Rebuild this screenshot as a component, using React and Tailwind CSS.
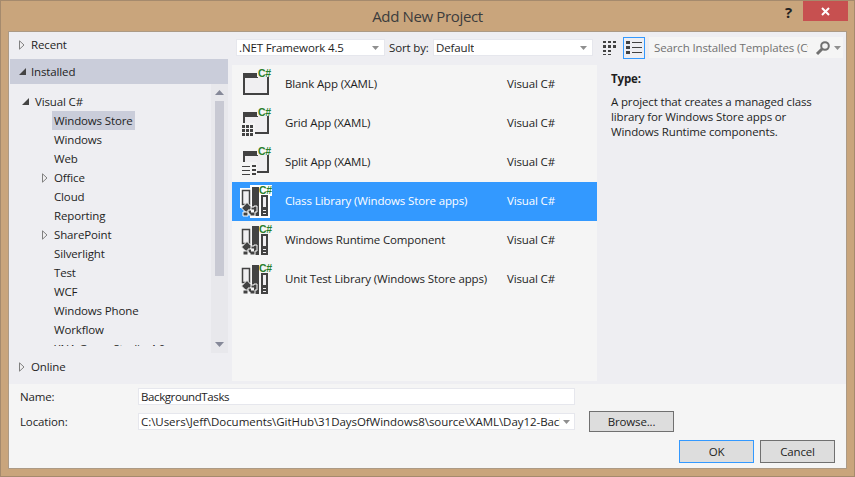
import React from "react";

const font = { fontFamily: '"Open Sans", "Noto Sans", sans-serif', fontSize: "11.5px", letterSpacing: "-0.14px" };

function CSharp({ x = 22, y = 12 }) {
  return (
    <text x={x} y={y} fontSize="10.5" fontWeight="700" fill="#2a7f2a" fontFamily='"Liberation Sans", sans-serif' style={{ letterSpacing: "-0.4px" }}>C#</text>
  );
}

function WindowIcon({ kind }) {
  return (
    <svg width="40" height="39" viewBox="0 0 40 39" className="shrink-0">
      <rect x="8" y="10" width="24" height="19" fill="#f0eff1" stroke="#424242" strokeWidth="2" />
      <rect x="7" y="8" width="15" height="5" fill="#424242" />
      <rect x="21" y="4" width="13" height="8" fill="#f5f5f5" />
      <CSharp />
      {kind === "grid" && (
        <g>
          <rect x="4" y="19" width="15" height="15" fill="#f5f5f5" />
          {[0, 4, 8].map((i) => [0, 4, 8].map((j) => <rect key={i + "-" + j} x={6 + i} y={21 + j} width="3" height="3" fill="#424242" />))}
        </g>
      )}
      {kind === "split" && (
        <g>
          <rect x="4" y="19" width="17" height="16" fill="#f5f5f5" />
          <rect x="6" y="23" width="8" height="1" fill="#424242" />
          <rect x="6" y="27" width="8" height="1" fill="#424242" />
          <rect x="6" y="31" width="8" height="1" fill="#424242" />
          <rect x="16" y="22" width="4" height="2" fill="#424242" />
          <rect x="16" y="26" width="4" height="2" fill="#424242" />
          <rect x="16" y="30" width="4" height="2" fill="#424242" />
        </g>
      )}
    </svg>
  );
}

function LibIcon({ selected }) {
  const halo = selected ? "#ffffff" : "#f5f5f5";
  const d = "#424242";
  return (
    <svg width="40" height="39" viewBox="0 0 40 39" className="shrink-0">
      <rect x="4" y="6" width="12" height="20" fill={halo} />
      <rect x="14" y="3" width="11" height="33" fill={halo} />
      <rect x="23" y="11" width="11" height="25" fill={halo} />
      <rect x="21" y="3" width="15" height="11" fill={halo} />
      <rect x="6.500" y="8.500" width="7" height="14" fill="#f0eff1" stroke={d} strokeWidth="1.500" />
      <rect x="16" y="5" width="7" height="29" fill={d} />
      <rect x="25" y="13" width="7" height="21" fill={d} />
      <rect x="27" y="15" width="3" height="10" fill="#f0eff1" />
      <rect x="27" y="28" width="3" height="1" fill="#f0eff1" />
      <rect x="27" y="31" width="3" height="1" fill="#f0eff1" />
      <path d="M5.500 26l5.500-5.500 5.500 5.500-5.500 5.500z" fill={d} stroke={halo} strokeWidth="1" />
      <path d="M12 28h3v-3h3v-1h3v6h-2v4h-5v-2h-2z" fill={d} stroke={halo} strokeWidth="1" />
      <rect x="15" y="27.500" width="3" height="3" fill={halo} />
      <path d="M7 30h5v4H7z" fill={d} stroke={halo} strokeWidth="1" />
      <CSharp x={23} y={12} />
    </svg>
  );
}

function Closed() {
  return (
    <svg width="6" height="10" viewBox="0 0 6 10" className="shrink-0">
      <path d="M0.500 0.800L5 5 0.500 9.200z" fill="#f0eff1" stroke="#808080" strokeWidth="1" />
    </svg>
  );
}

function Open() {
  return (
    <svg width="7" height="7" viewBox="0 0 7 7" className="shrink-0">
      <path d="M7 0v7H0z" fill="#444444" />
    </svg>
  );
}

function Caret({ color = "#8f8f8f" }) {
  return (
    <svg width="7" height="4" viewBox="0 0 7 4" className="shrink-0">
      <path d="M0 0h7L3.500 4z" fill={color} />
    </svg>
  );
}

function Combo({ className, label }) {
  return (
    <div className={"flex h-[17px] items-center justify-between bg-white border border-[#e6e7ed] pl-[2px] pr-[5px] " + className}>
      <span className="leading-[15px] text-[#1e1e1e] whitespace-nowrap overflow-hidden">{label}</span>
      <Caret />
    </div>
  );
}

function TreeItem({ label, arrow, selected }) {
  return (
    <div className="flex h-[19px] items-center">
      <div className="flex w-[11px] pl-[1px] shrink-0">{arrow && <Closed />}</div>
      <span className={"leading-[19px] px-[2px] whitespace-nowrap " + (selected ? "bg-[#cacdda]" : "")}>{label}</span>
    </div>
  );
}

function Row({ icon, name, selected }) {
  return (
    <div className={"flex h-[39px] items-center pl-[4px] " + (selected ? "bg-[#3399ff] text-white" : "text-[#1e1e1e]")}>
      {icon}
      <span className="ml-[9px] mb-[2px] w-[222px] whitespace-nowrap">{name}</span>
      <span className="mb-[2px] whitespace-nowrap">Visual C#</span>
    </div>
  );
}

function Button({ label, className }) {
  return (
    <div className={"flex items-center justify-center bg-[#dddddd] border border-[#707070] text-[#1e1e1e] " + className}>{label}</div>
  );
}

const tree = [
  ["Windows Store", false, true],
  ["Windows"],
  ["Web"],
  ["Office", true],
  ["Cloud"],
  ["Reporting"],
  ["SharePoint", true],
  ["Silverlight"],
  ["Test"],
  ["WCF"],
  ["Windows Phone"],
  ["Workflow"],
  ["XNA Game Studio 4.0"],
];

export default function App() {
  return (
    <div style={font} className="w-[855px] h-[477px] flex flex-col bg-[#c9a57c] border border-[#a58a6d] text-[#1e1e1e] overflow-hidden">
      <div className="relative h-[30px] shrink-0 flex items-center justify-center">
        <span className="text-[15px] tracking-[-0.35px] leading-[20px] text-[#3c3c3c]">Add New Project</span>
        <span className="absolute left-[784px] top-[1px] text-[15px] font-bold leading-[20px] text-[#222222]">?</span>
        <div className="absolute left-[802px] top-0 w-[45px] h-[20px] bg-[#c75050] flex items-center justify-center">
          <svg width="9" height="9" viewBox="0 0 9 9"><path d="M1 1l7 7M8 1l-7 7" stroke="#fff" strokeWidth="2" /></svg>
        </div>
      </div>
      <div className="mx-[7px] h-[438px] flex flex-col bg-[#eeeef2] border border-[#ac9a85]">
        <div className="h-[352px] flex shrink-0 relative">
          <div className="w-[223px] shrink-0 flex flex-col pl-[1px] pt-[2px]">
            <div className="flex h-[22px] items-center pl-[9px]">
              <Closed />
              <span className="ml-[6px]">Recent</span>
            </div>
            <div className="mt-[3px] flex h-[25px] items-center pl-[9px] bg-[#cacdda] mr-[4px]">
              <Open />
              <span className="ml-[5px]">Installed</span>
            </div>
            <div className="h-[269px] flex shrink-0 mr-[4px]">
              <div className="flex-1 pl-[12px] pt-[8px] overflow-hidden">
                <div className="h-[254px] overflow-hidden">
                  <div className="flex h-[19px] items-center">
                    <Open />
                    <span className="ml-[6px]">Visual C#</span>
                  </div>
                  <div className="pl-[19px]">
                    {tree.map(([label, arrow, selected]) => (
                      <TreeItem key={label} label={label} arrow={arrow} selected={selected} />
                    ))}
                  </div>
                </div>
              </div>
              <div className="w-[17px] shrink-0 bg-[#e8e8ec] flex flex-col items-center">
                <div className="h-[17px] flex items-center justify-center">
                  <svg width="9" height="5" viewBox="0 0 9 5"><path d="M0 5L4.500 0 9 5z" fill="#868999" /></svg>
                </div>
                <div className="w-[9px] h-[175px] bg-[#c8c9d3]" />
                <div className="flex-1" />
                <div className="h-[17px] flex items-center justify-center">
                  <svg width="9" height="5" viewBox="0 0 9 5"><path d="M0 0L4.500 5 9 0z" fill="#868999" /></svg>
                </div>
              </div>
            </div>
            <div className="mt-[2px] flex h-[23px] items-center pl-[9px]">
              <Closed />
              <span className="ml-[6px]">Online</span>
            </div>
          </div>
          <div className="w-[365px] shrink-0 flex flex-col">
            <div className="flex h-[33px] items-start pt-[7px] pl-[4px] shrink-0">
              <Combo className="w-[149px]" label=".NET Framework 4.5" />
              <span className="ml-[4px] w-[44px] leading-[17px]">Sort by:</span>
              <Combo className="w-[160px]" label="Default" />
            </div>
            <div className="h-[316px] bg-[#f5f5f5]">
              <Row icon={<WindowIcon />} name="Blank App (XAML)" />
              <Row icon={<WindowIcon kind="grid" />} name="Grid App (XAML)" />
              <Row icon={<WindowIcon kind="split" />} name="Split App (XAML)" />
              <Row icon={<LibIcon selected />} name="Class Library (Windows Store apps)" selected />
              <Row icon={<LibIcon />} name="Windows Runtime Component" />
              <Row icon={<LibIcon />} name="Unit Test Library (Windows Store apps)" />
            </div>
          </div>
          <div className="flex-1 flex flex-col">
            <div className="flex h-[33px] items-start pt-[5px] pl-[2px] shrink-0">
              <div className="w-[22px] h-[22px] flex items-center justify-center">
                <svg width="14" height="14" viewBox="0 0 14 14" fill="#424242">
                  <rect x="0" y="0" width="3" height="2" /><rect x="5" y="0" width="3" height="2" /><rect x="10" y="0" width="3" height="2" />
                  <rect x="0" y="4" width="3" height="3" /><rect x="5" y="4" width="3" height="3" /><rect x="10" y="4" width="3" height="3" />
                  <rect x="0" y="9" width="3" height="2" /><rect x="5" y="9" width="3" height="2" />
                  <rect x="0" y="13" width="3" height="1" /><rect x="5" y="13" width="3" height="1" />
                </svg>
              </div>
              <div className="ml-[2px] w-[22px] h-[22px] border border-[#3399ff] flex items-center justify-center">
                <svg width="16" height="14" viewBox="0 0 16 14" fill="#424242">
                  <rect x="0" y="0" width="4" height="3" /><rect x="6" y="1" width="10" height="1" />
                  <rect x="0" y="5" width="4" height="3" /><rect x="6" y="6" width="10" height="1" />
                  <rect x="0" y="10" width="4" height="3" /><rect x="6" y="11" width="10" height="1" />
                </svg>
              </div>
              <div className="ml-[4px] w-[194px] h-[21px] bg-[#f5f5f5] flex items-center pl-[5px]">
                <span className="w-[154px] text-[#717171] whitespace-nowrap overflow-hidden">Search Installed Templates (Ctrl+E)</span>
                <svg width="16" height="16" viewBox="0 0 16 16" className="ml-[7px] shrink-0">
                  <circle cx="10" cy="6" r="3.800" fill="none" stroke="#717171" strokeWidth="2" />
                  <path d="M7 9L2 14" stroke="#717171" strokeWidth="3" />
                </svg>
                <span className="ml-[3px]"><Caret /></span>
              </div>
            </div>
            <div className="pl-[14px] pt-[6px] w-[222px]">
              <div className="leading-[16px] font-bold">Type:</div>
              <p className="mt-[7px] leading-[15px]">A project that creates a managed class library for Windows Store apps or Windows Runtime components.</p>
            </div>
          </div>
        </div>
        <div className="flex-1 bg-[#f5f5f5] relative pl-[11px] pt-[4px]">
          <div className="flex items-center h-[17px]">
            <span className="w-[118px]">Name:</span>
            <div className="w-[437px] h-[17px] bg-white border border-[#e6e7ed] pl-[2px] leading-[15px] tracking-[-0.4px]">BackgroundTasks</div>
          </div>
          <div className="flex items-center mt-[6px] h-[21px]">
            <span className="w-[118px]">Location:</span>
            <div className="w-[437px] h-[17px] bg-white border border-[#e6e7ed] pl-[2px] pr-[4px] flex items-center justify-between">
              <span className="leading-[15px] whitespace-nowrap overflow-hidden tracking-[-0.05px]">C:\Users\Jeff\Documents\GitHub\31DaysOfWindows8\source\XAML\Day12-BackgroundTasks</span>
              <span className="ml-[3px]"><Caret /></span>
            </div>
            <Button label="Browse..." className="ml-[14px] w-[85px] h-[21px]" />
          </div>
          <div className="flex justify-end mt-[8px] pr-[11px]">
            <Button label="OK" className="w-[75px] h-[23px] !border-[#3399ff]" />
            <Button label="Cancel" className="ml-[6px] w-[75px] h-[23px]" />
          </div>
        </div>
      </div>
    </div>
  );
}
